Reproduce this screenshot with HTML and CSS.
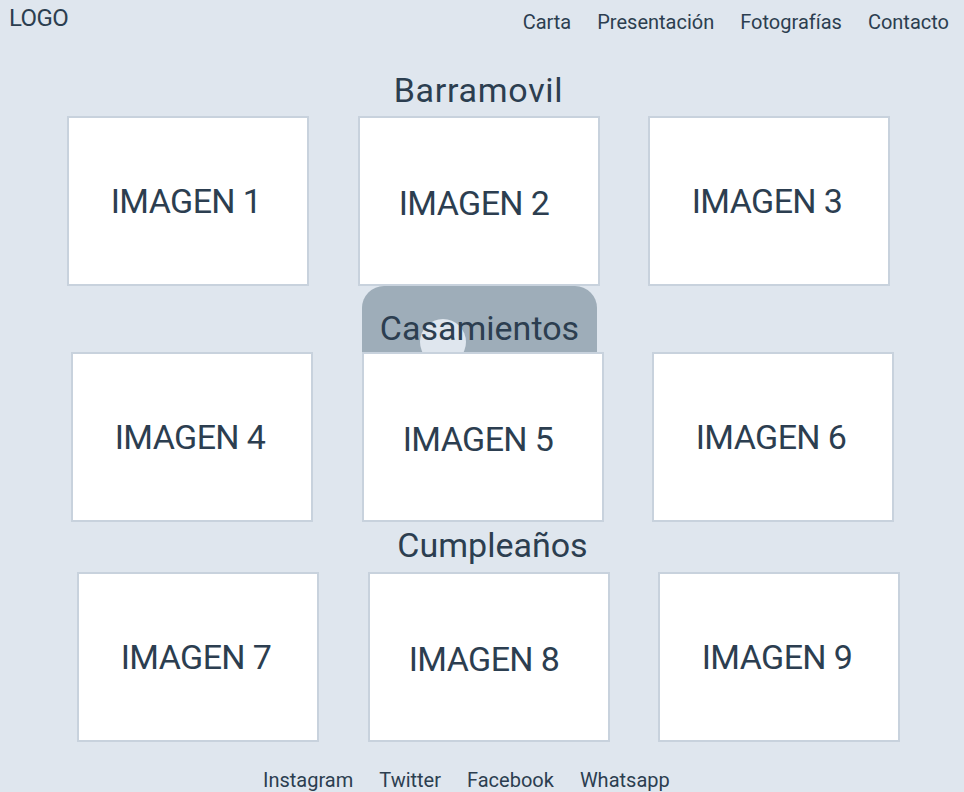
FILE: index.html
```html
<!DOCTYPE html>
<html lang="es">
<head>
<meta charset="utf-8">
<title>Barramovil</title>
<link rel="stylesheet" href="styles.css">
</head>
<body>
<header class="header">
  <div class="logo">LOGO</div>
  <nav class="nav">
    <a class="nav-link" href="#">Carta</a>
    <a class="nav-link" href="#">Presentación</a>
    <a class="nav-link" href="#">Fotografías</a>
    <a class="nav-link" href="#">Contacto</a>
  </nav>
</header>
<main>
  <section class="section section-1">
    <h2 class="title">Barramovil</h2>
    <div class="row">
      <div class="card">IMAGEN 1</div>
      <div class="card card-mid">IMAGEN 2</div>
      <div class="card">IMAGEN 3</div>
    </div>
  </section>
  <section class="section section-2">
    <div class="tab-wrap">
      <h2 class="title tab"><span class="tab-dot"></span><span class="tab-text">Casamientos</span></h2>
    </div>
    <div class="row">
      <div class="card">IMAGEN 4</div>
      <div class="card card-mid">IMAGEN 5</div>
      <div class="card">IMAGEN 6</div>
    </div>
  </section>
  <section class="section section-3">
    <h2 class="title title-3">Cumpleaños</h2>
    <div class="row">
      <div class="card">IMAGEN 7</div>
      <div class="card card-mid">IMAGEN 8</div>
      <div class="card">IMAGEN 9</div>
    </div>
  </section>
</main>
<footer class="footer">
  <a class="foot-link" href="#">Instagram</a>
  <a class="foot-link" href="#">Twitter</a>
  <a class="foot-link" href="#">Facebook</a>
  <a class="foot-link" href="#">Whatsapp</a>
</footer>
</body>
</html>
```
FILE: styles.css
```css
* { box-sizing: border-box; }
html, body {
  margin: 0;
  padding: 0;
  background: #dfe6ee;
  color: #2c3e50;
  font-family: Roboto, "Liberation Sans", sans-serif;
}
body { height: 792px; overflow: hidden; }
a { color: #2c3e50; text-decoration: none; }

.header {
  height: 70px;
  display: flex;
  justify-content: space-between;
  align-items: flex-start;
}
.logo {
  font-size: 24px;
  line-height: 28px;
  letter-spacing: -0.6px;
  padding: 4px 0 0 9px;
}
.nav {
  display: flex;
  gap: 26px;
  padding: 11px 15px 0 0;
}
.nav-link {
  font-size: 20px;
  line-height: 23px;
}

.section { width: 823px; }
.section-1 { margin-left: 67px; }
.section-2 { margin-left: 71px; }
.section-3 { margin-left: 77px; }

.title {
  margin: 0;
  font-weight: 400;
  font-size: 34px;
  line-height: 40px;
  text-align: center;
}
.section-1 .title { margin-bottom: 6px; letter-spacing: 0.7px; }
.title-3 { margin: 3px 0 7px 8px; }

.tab-wrap {
  display: flex;
  justify-content: center;
  padding-right: 6px;
}
.tab {
  position: relative;
  overflow: hidden;
  width: 235px;
  height: 66px;
  padding-top: 22px;
  background: #9eadb9;
  border-radius: 22px 22px 0 0;
}
.tab-dot {
  position: absolute;
  left: 58px;
  top: 33px;
  width: 46px;
  height: 46px;
  border-radius: 50%;
  background: #dfe6ee;
}
.tab-text { position: relative; }

.row {
  display: flex;
  gap: 48.5px;
}
.card {
  width: 242px;
  height: 170px;
  background: #ffffff;
  border: 2px solid #c8d2dd;
  display: flex;
  align-items: center;
  justify-content: center;
  padding-right: 4px;
  font-size: 34px;
  line-height: 40px;
  letter-spacing: -0.6px;
}
.card-mid { padding: 4px 9px 0 0; }

.footer {
  display: flex;
  gap: 26px;
  margin-top: 27px;
  padding-left: 263px;
}
.foot-link {
  font-size: 20px;
  line-height: 23px;
}
```
